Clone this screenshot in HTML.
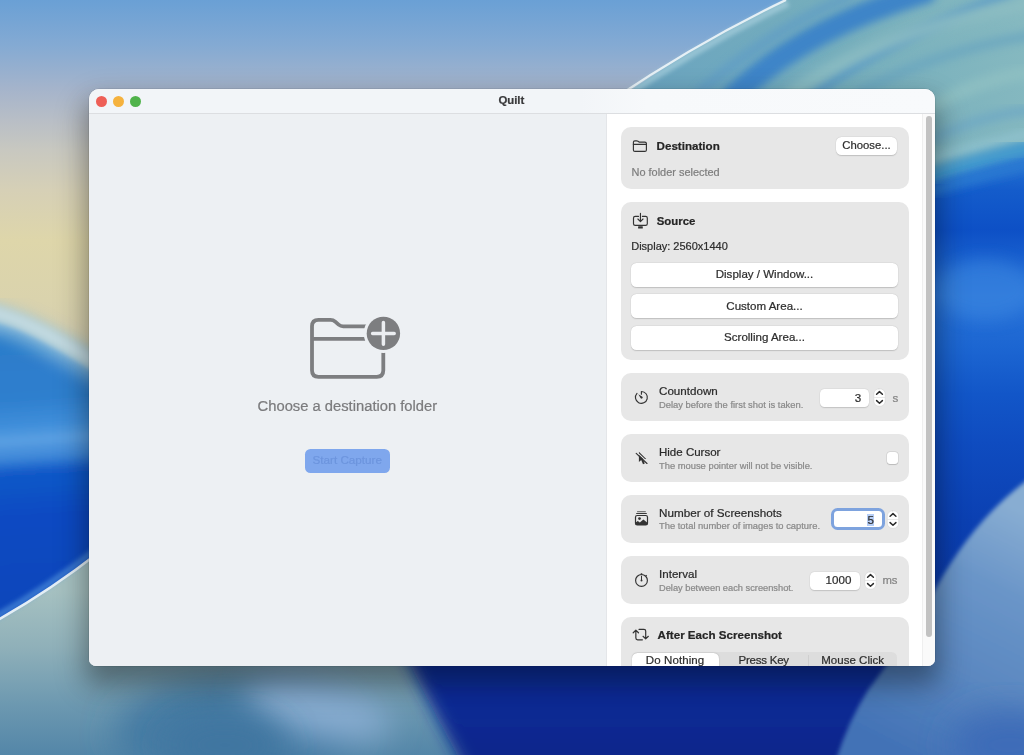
<!DOCTYPE html>
<html lang="en">
<head>
<meta charset="utf-8">
<title>Quilt</title>
<style>
*{box-sizing:border-box;margin:0;padding:0}
html,body{width:1024px;height:755px;overflow:hidden;background:#2a60b8}
body{position:relative;font-family:"Liberation Sans",sans-serif;color:#2b2b2b}
#wall{position:absolute;left:0;top:0;width:1024px;height:755px;display:block}
#shadow{position:absolute;left:89px;top:89px;width:846px;height:577px;border-radius:10px 10px 7px 7px;box-shadow:0 0 0 0.5px rgba(0,0,0,.13),0 14px 24px 1px rgba(0,0,0,.27),0 16px 30px 9px rgba(0,0,0,.15)}
#win{position:absolute;left:89px;top:89px;width:846px;height:577px;border-radius:10px 10px 7px 7px;overflow:hidden;background:#edf0f3}
#c{position:absolute;left:-89px;top:-89px;width:1024px;height:755px;will-change:transform}
.a{position:absolute;white-space:nowrap;-webkit-text-stroke:0.22px currentColor}
.btn{background:#fff;border-radius:5.5px;box-shadow:0 0.5px 1.2px rgba(0,0,0,.16),0 0 0 0.5px rgba(0,0,0,.03)}
svg.i{position:absolute;overflow:visible}
</style>
</head>
<body>
<svg id="wall" viewBox="0 0 1024 755">
<defs>
<filter id="b2" x="-20%" y="-20%" width="140%" height="140%"><feGaussianBlur stdDeviation="2"/></filter>
<filter id="b4" x="-20%" y="-20%" width="140%" height="140%"><feGaussianBlur stdDeviation="4"/></filter>
<filter id="b8" x="-30%" y="-30%" width="160%" height="160%"><feGaussianBlur stdDeviation="8"/></filter>
<filter id="b16" x="-40%" y="-40%" width="180%" height="180%"><feGaussianBlur stdDeviation="16"/></filter>
<linearGradient id="sky" x1="0" y1="0" x2="0" y2="755" gradientUnits="userSpaceOnUse">
<stop offset="0" stop-color="#6aa0d5"/>
<stop offset="0.06" stop-color="#84aad3"/>
<stop offset="0.118" stop-color="#a5b4cb"/>
<stop offset="0.159" stop-color="#b8bec6"/>
<stop offset="0.199" stop-color="#c8c8c0"/>
<stop offset="0.252" stop-color="#d6d0b6"/>
<stop offset="0.318" stop-color="#ded6aa"/>
<stop offset="0.397" stop-color="#dad3ad"/>
<stop offset="0.5" stop-color="#d2ccb0"/>
</linearGradient>
<linearGradient id="lblue" x1="0" y1="312" x2="20" y2="620" gradientUnits="userSpaceOnUse">
<stop offset="0" stop-color="#4c98d4"/>
<stop offset="0.075" stop-color="#2c7cca"/>
<stop offset="0.285" stop-color="#2e7fce"/>
<stop offset="0.37" stop-color="#3f8eda"/>
<stop offset="0.42" stop-color="#5a9fe2"/>
<stop offset="0.475" stop-color="#3f88d8"/>
<stop offset="0.525" stop-color="#1259c8"/>
<stop offset="0.675" stop-color="#0a49c2"/>
<stop offset="1" stop-color="#0b46ba"/>
</linearGradient>
<linearGradient id="lteal" x1="0" y1="590" x2="0" y2="755" gradientUnits="userSpaceOnUse">
<stop offset="0" stop-color="#a6c1c1"/>
<stop offset="0.35" stop-color="#8fb0b9"/>
<stop offset="0.7" stop-color="#6c98b0"/>
<stop offset="1" stop-color="#5386a8"/>
</linearGradient>
<linearGradient id="rblue" x1="0" y1="150" x2="0" y2="620" gradientUnits="userSpaceOnUse">
<stop offset="0" stop-color="#2f7ad4"/>
<stop offset="0.085" stop-color="#145ccb"/>
<stop offset="0.17" stop-color="#0d50c6"/>
<stop offset="0.23" stop-color="#185fce"/>
<stop offset="0.31" stop-color="#2872d8"/>
<stop offset="0.42" stop-color="#1c66d2"/>
<stop offset="0.52" stop-color="#1256c8"/>
<stop offset="0.62" stop-color="#0f4cc0"/>
<stop offset="0.79" stop-color="#0b40b2"/>
<stop offset="1" stop-color="#0a38a8"/>
</linearGradient>
<linearGradient id="blob" x1="1000" y1="500" x2="880" y2="740" gradientUnits="userSpaceOnUse">
<stop offset="0" stop-color="#88add2"/>
<stop offset="0.3" stop-color="#6a95c8"/>
<stop offset="0.65" stop-color="#5a87c0"/>
<stop offset="1" stop-color="#4272b6"/>
</linearGradient>
<linearGradient id="tealg" x1="640" y1="90" x2="1024" y2="0" gradientUnits="userSpaceOnUse">
<stop offset="0" stop-color="#6aa4c0"/>
<stop offset="0.5" stop-color="#76aebc"/>
<stop offset="1" stop-color="#86b9c0"/>
</linearGradient>
<linearGradient id="navy" x1="0" y1="660" x2="0" y2="760" gradientUnits="userSpaceOnUse">
<stop offset="0" stop-color="#0c2f9e"/>
<stop offset="0.5" stop-color="#0a2a94"/>
<stop offset="1" stop-color="#08258a"/>
</linearGradient>
</defs>
<!-- base sky / sand -->
<rect width="1024" height="755" fill="url(#sky)"/>
<!-- left blue waves -->
<path d="M-20,318 C20,324 50,344 100,374 L300,430 L300,640 L-20,640 Z" fill="url(#lblue)" filter="url(#b2)"/>
<path d="M-20,316 C20,322 50,342 110,376" fill="none" stroke="#8fc0dc" stroke-width="26" filter="url(#b8)" opacity=".8"/>
<path d="M-20,310 C20,316 50,336 110,370" fill="none" stroke="#c4dbe2" stroke-width="12" filter="url(#b4)"/>
<!-- lower-left teal under white curve -->
<path d="M-20,629 Q47.5,594 100,552 Q160,500 260,450 L620,450 L620,780 L-20,780 Z" fill="url(#lteal)"/>
<!-- bottom-left darker steel -->
<ellipse cx="235" cy="735" rx="120" ry="55" fill="#447aa3" filter="url(#b16)"/>
<ellipse cx="318" cy="708" rx="75" ry="30" fill="#86abcf" filter="url(#b16)" transform="rotate(14 318 708)"/>
<ellipse cx="225" cy="745" rx="60" ry="30" fill="#3f76a0" filter="url(#b16)"/>
<!-- navy bottom -->
<path d="M360,560 L960,560 L960,800 L482,800 Q425,700 360,560 Z" fill="url(#navy)" filter="url(#b8)"/>
<!-- right side blue -->
<rect x="880" y="140" width="200" height="520" fill="url(#rblue)"/>
<ellipse cx="985" cy="290" rx="50" ry="30" fill="#3a86e0" opacity=".6" filter="url(#b8)"/>
<!-- teal arc top-right -->
<path d="M596,115 Q700,39 792,-3 L792,-6 L1040,-6 L1040,148 Q985,158 930,176 L596,176 Z" fill="url(#tealg)"/>
<g fill="none" stroke-linecap="round">
<path d="M733,97 Q800,30 925,-8" stroke="#3c84c8" stroke-width="23" filter="url(#b4)"/>
<path d="M812,95 Q890,38 1010,-6" stroke="#4f92c8" stroke-width="9" filter="url(#b4)" opacity=".75"/>
<path d="M700,92 Q770,30 850,-4" stroke="#5f9cc6" stroke-width="10" filter="url(#b4)" opacity=".8"/>
<path d="M790,95 Q880,30 1030,4" stroke="#8dbdc2" stroke-width="14" filter="url(#b4)" opacity=".8"/>
<path d="M860,92 Q940,50 1030,36" stroke="#6aa6c0" stroke-width="10" filter="url(#b4)" opacity=".8"/>
<path d="M925,112 Q970,82 1030,72" stroke="#8fc0c2" stroke-width="14" filter="url(#b4)" opacity=".8"/>
<path d="M930,140 Q980,116 1030,110" stroke="#6ea8c4" stroke-width="10" filter="url(#b4)" opacity=".8"/>
<path d="M925,160 Q980,146 1030,134" stroke="#93c4d0" stroke-width="9" filter="url(#b4)" opacity=".8"/>
<path d="M925,178 Q980,160 1030,148" stroke="#459acd" stroke-width="17" filter="url(#b4)"/>
<path d="M925,192 Q980,176 1030,164" stroke="#2a7ad2" stroke-width="12" filter="url(#b4)" opacity=".9"/>
</g>
<!-- light blob bottom-right -->
<path d="M1030,478 Q975,518 937,586 Q899,650 868,690 Q848,722 836,760 L1030,760 Z" fill="url(#blob)" filter="url(#b2)"/>
<ellipse cx="1010" cy="745" rx="60" ry="35" fill="#3d6cb8" filter="url(#b16)"/>
<!-- white curves -->
<path d="M600,106 Q700,36 792,-5" fill="none" stroke="#eef4f8" stroke-width="2.2" filter="url(#b2)" opacity=".0"/>
<path d="M614,103 Q702,44 788,3" fill="none" stroke="#a9d0de" stroke-width="7" opacity=".7" filter="url(#b2)"/>
<path d="M612,100 Q700,41 786,0" fill="none" stroke="#eaf2f7" stroke-width="2.4" opacity=".95"/>
<path d="M-6,618 Q47.5,588 100,547" fill="none" stroke="#5a9be0" stroke-width="7" opacity=".55" filter="url(#b2)"/>
<path d="M-6,622 Q47.5,592.5 100,551.5" fill="none" stroke="#e4eef5" stroke-width="2.6"/>
</svg>

<div id="shadow"></div>
<div id="win"><div id="c">
<div style="position:absolute;left:89px;top:89px;width:846px;height:24px;background:linear-gradient(90deg,#f2f5f8 0,#f2f5f8 58%,#f7f9fb 66%,#f8fafc 100%);"></div>
<div style="position:absolute;left:89px;top:113px;width:846px;height:1px;background:#dcdee1;"></div>
<div style="position:absolute;left:95.5px;top:95.5px;width:11.0px;height:11.0px;border-radius:50%;background:#ee5f57;"></div>
<div style="position:absolute;left:112.8px;top:95.5px;width:11.0px;height:11.0px;border-radius:50%;background:#f5b23e;"></div>
<div style="position:absolute;left:130.1px;top:95.5px;width:11.0px;height:11.0px;border-radius:50%;background:#50b34b;"></div>
<div class="a" style="left:498.4px;top:93.00px;font-size:11.4px;line-height:14px;color:#3a3a3c;font-weight:bold;">Quilt</div>
<div style="position:absolute;left:89px;top:114px;width:518px;height:552px;background:#edf0f3;"></div>
<div style="position:absolute;left:607px;top:114px;width:328px;height:552px;background:#ffffff;"></div>
<div style="position:absolute;left:606px;top:114px;width:1px;height:552px;background:#e4e6e9;"></div>
<div class="a" style="left:257.6px;top:397.00px;font-size:14.75px;line-height:18px;color:#7b7b7d;">Choose a destination folder</div>
<div style="position:absolute;left:305px;top:449px;width:85px;height:24px;border-radius:5.5px;background:#7fa7ed;"></div>
<div class="a" style="left:312.5px;top:452.00px;font-size:11.7px;line-height:15px;color:#6d95de;">Start Capture</div>
<div style="position:absolute;left:922px;top:114px;width:13px;height:552px;background:#fafafa;border-left:1px solid #efefef;"></div>
<div style="position:absolute;left:926px;top:116px;width:6px;height:520.5px;background:#c2c2c2;border-radius:3px;"></div>
<div style="position:absolute;left:621px;top:127px;width:288px;height:62px;background:#e7e7e7;border-radius:10px;"></div>
<div style="position:absolute;left:621px;top:202px;width:288px;height:158px;background:#e7e7e7;border-radius:10px;"></div>
<div style="position:absolute;left:621px;top:373px;width:288px;height:48px;background:#e7e7e7;border-radius:10px;"></div>
<div style="position:absolute;left:621px;top:434px;width:288px;height:48px;background:#e7e7e7;border-radius:10px;"></div>
<div style="position:absolute;left:621px;top:495px;width:288px;height:48px;background:#e7e7e7;border-radius:10px;"></div>
<div style="position:absolute;left:621px;top:556px;width:288px;height:48px;background:#e7e7e7;border-radius:10px;"></div>
<div style="position:absolute;left:621px;top:617px;width:288px;height:103px;background:#e7e7e7;border-radius:10px;"></div>
<div class="a" style="left:656.6px;top:139.00px;font-size:11.6px;line-height:14px;color:#262626;font-weight:bold;">Destination</div>
<div class="a" style="left:631.5px;top:165.00px;font-size:10.95px;line-height:14px;color:#7e7e7e;">No folder selected</div>
<div class="btn" style="position:absolute;left:836px;top:137px;width:61px;height:18px;"></div>
<div class="a" style="left:836.0px;top:138.00px;font-size:11.3px;line-height:14px;color:#2e2e2e;width:61px;text-align:center;">Choose...</div>
<div class="a" style="left:656.7px;top:214.00px;font-size:11.4px;line-height:14px;color:#262626;font-weight:bold;">Source</div>
<div class="a" style="left:631.2px;top:239.00px;font-size:11.0px;line-height:14px;color:#2e2e2e;">Display: 2560x1440</div>
<div class="btn" style="position:absolute;left:631px;top:263.0px;width:267px;height:24.0px;"></div>
<div class="a" style="left:631.0px;top:267.00px;font-size:11.55px;line-height:14px;color:#2e2e2e;width:267px;text-align:center;">Display / Window...</div>
<div class="btn" style="position:absolute;left:631px;top:294.0px;width:267px;height:24.0px;"></div>
<div class="a" style="left:631.0px;top:299.00px;font-size:11.55px;line-height:14px;color:#2e2e2e;width:267px;text-align:center;">Custom Area...</div>
<div class="btn" style="position:absolute;left:631px;top:325.5px;width:267px;height:24.0px;"></div>
<div class="a" style="left:631.0px;top:330.00px;font-size:11.55px;line-height:14px;color:#2e2e2e;width:267px;text-align:center;">Scrolling Area...</div>
<div class="a" style="left:659.0px;top:383.00px;font-size:11.62px;line-height:15px;color:#2b2b2b;">Countdown</div>
<div class="a" style="left:659.0px;top:399.00px;font-size:9.39px;line-height:12px;color:#8a8a8a;">Delay before the first shot is taken.</div>
<div class="a" style="left:659.0px;top:445.00px;font-size:11.53px;line-height:14px;color:#2b2b2b;">Hide Cursor</div>
<div class="a" style="left:659.0px;top:460.00px;font-size:9.37px;line-height:12px;color:#8a8a8a;">The mouse pointer will not be visible.</div>
<div class="a" style="left:659.0px;top:505.00px;font-size:11.7px;line-height:15px;color:#2b2b2b;">Number of Screenshots</div>
<div class="a" style="left:659.0px;top:520.00px;font-size:9.4px;line-height:12px;color:#8a8a8a;">The total number of images to capture.</div>
<div class="a" style="left:659.0px;top:567.00px;font-size:11.6px;line-height:14px;color:#2b2b2b;">Interval</div>
<div class="a" style="left:659.0px;top:582.00px;font-size:9.27px;line-height:12px;color:#8a8a8a;">Delay between each screenshot.</div>
<div style="position:absolute;left:820px;top:389px;width:49px;height:17.5px;background:#fff;border-radius:4.5px;box-shadow:0 0.5px 1.2px rgba(0,0,0,.15),0 0 0 0.5px rgba(0,0,0,.03);"></div>
<div class="a" style="left:820.0px;top:391.00px;font-size:11.6px;line-height:14px;color:#2e2e2e;width:41.2px;text-align:right;">3</div>
<div class="a" style="left:892.4px;top:391.00px;font-size:11.6px;line-height:14px;color:#858585;">s</div>
<div style="position:absolute;left:886.5px;top:452px;width:11.5px;height:11.5px;background:#fff;border-radius:3px;box-shadow:0 0 0 0.5px rgba(0,0,0,.12),0 0.5px 1px rgba(0,0,0,.14);"></div>
<div style="position:absolute;left:830.5px;top:508.3px;width:54.0px;height:21.69999999999999px;background:#fff;border-radius:6.5px;border:3px solid #7ea3de;"></div>
<div style="position:absolute;left:867px;top:513.5px;width:7.2999999999999545px;height:12.100000000000023px;background:#b5cdf6;"></div>
<div class="a" style="left:830.0px;top:513.00px;font-size:11.6px;line-height:14px;color:#2e2e2e;width:43.9px;text-align:right;">5</div>
<div style="position:absolute;left:810px;top:572px;width:49.5px;height:17.5px;background:#fff;border-radius:4.5px;box-shadow:0 0.5px 1.2px rgba(0,0,0,.15),0 0 0 0.5px rgba(0,0,0,.03);"></div>
<div class="a" style="left:810.0px;top:573.00px;font-size:11.6px;line-height:14px;color:#2e2e2e;width:41.4px;text-align:right;">1000</div>
<div class="a" style="left:882.4px;top:573.00px;font-size:11.3px;line-height:14px;color:#858585;">ms</div>
<div class="a" style="left:657.6px;top:628.00px;font-size:11.6px;line-height:14px;color:#262626;font-weight:bold;">After Each Screenshot</div>
<div style="position:absolute;left:632px;top:652px;width:265px;height:24px;background:#dddddd;border-radius:5.5px;"></div>
<div style="position:absolute;left:632px;top:652.5px;width:87px;height:23.5px;background:#fff;border-radius:5.5px;box-shadow:0 0.5px 1.5px rgba(0,0,0,.25);"></div>
<div style="position:absolute;left:808px;top:655px;width:1px;height:21px;background:#cfcfcf;"></div>
<div class="a" style="left:645.8px;top:653.00px;font-size:11.5px;line-height:14px;color:#2e2e2e;letter-spacing:0.1px;">Do Nothing</div>
<div class="a" style="left:738.5px;top:653.00px;font-size:11.5px;line-height:14px;color:#2e2e2e;letter-spacing:-0.23px;">Press Key</div>
<div class="a" style="left:821.2px;top:653.00px;font-size:11.5px;line-height:14px;color:#2e2e2e;letter-spacing:0.03px;">Mouse Click</div>
<svg class="i" style="left:0;top:0" width="1024" height="755" viewBox="0 0 1024 755" fill="none" stroke-linecap="round" stroke-linejoin="round">
<!-- big folder -->
<g stroke="#7d7e80" stroke-width="3.8" stroke-linecap="butt">
<path d="M383.3,360 L383.3,331.3 Q383.3,326.3 378.3,326.3 L343.2,326.3 Q340.6,326.3 338.6,324.6 L335.2,321.6 Q333.2,319.8 330.4,319.8 L318.5,319.8 Q312,319.8 312,326.3 L312,370.3 Q312,376.8 318.5,376.8 L376.8,376.8 Q383.3,376.8 383.3,370.3 L383.3,352"/>
<path d="M312,338.8 H383"/>
</g>
<circle cx="383.4" cy="333.4" r="19.7" fill="#edf0f3"/>
<circle cx="383.4" cy="333.4" r="16.7" fill="#7d7e80"/>
<path d="M372.6,333.4 H394.2 M383.4,322.6 V344.2" stroke="#eceef1" stroke-width="3.5"/>
<!-- small folder -->
<g stroke="#333" stroke-width="1.15">
<path d="M633.4,142.3 Q633.4,140.8 634.9,140.8 L636.7,140.8 Q637.4,140.8 638,141.2 L638.7,141.7 Q639.2,142.1 640,142.1 L644.9,142.1 Q646.4,142.1 646.4,143.6 L646.4,149.9 Q646.4,151.4 644.9,151.4 L634.9,151.4 Q633.4,151.4 633.4,149.9 Z"/>
<path d="M633.4,144.4 H646.4"/>
</g>
<!-- source: monitor with arrow -->
<g stroke="#333" stroke-width="1.15">
<path d="M638.5,216.4 H635.2 Q633.5,216.4 633.5,218.1 V223.7 Q633.5,225.4 635.2,225.4 H645.6 Q647.3,225.4 647.3,223.7 V218.1 Q647.3,216.4 645.6,216.4 H642.4"/>
<path d="M640.45,213.4 V221.3 M637.9,219 L640.45,221.6 L643,219"/>
</g>
<rect x="638.1" y="226.3" width="4.7" height="2.3" rx="0.4" fill="#333"/>
<!-- countdown -->
<g stroke="#333" stroke-width="1.15">
<path d="M641.4,394.2 V391.45 A5.95,5.95 0 1 1 637.0,393.4"/>
</g>
<path d="M638.3,394.3 L642.4,396.7 A1.15,1.15 0 0 1 640.7,398.3 Z" fill="#333"/>
<!-- cursor slash -->
<path d="M638.9,451.7 L638.9,461.9 L641.2,459.9 L643.0,464.2 L644.8,463.4 L643.0,459.3 L646.2,459.1 Z" fill="#333"/>
<path d="M637.1,452.4 L647.9,462.6" stroke="#e7e7e7" stroke-width="1.3"/>
<path d="M636.2,453.3 L647.0,463.5" stroke="#333" stroke-width="1.15"/>
<!-- photos stack -->
<rect x="635.5" y="515.5" width="12" height="9.4" rx="1.7" stroke="#333" stroke-width="1.2"/>
<path d="M636.6,513.5 H646.4" stroke="#3a3a3a" stroke-width="1"/>
<path d="M637.5,511.7 H645.4" stroke="#555" stroke-width="0.9"/>
<circle cx="639.5" cy="518.6" r="1.35" fill="#333"/>
<path d="M635.6,522.6 L637.8,521.0 L639.8,522.5 L643.4,519.6 L647.4,522.7 L647.4,524.0 Q647.4,524.9 646.4,524.9 L636.6,524.9 Q635.6,524.9 635.6,524.0 Z" fill="#333"/>
<!-- timer -->
<circle cx="641.5" cy="580.4" r="5.9" stroke="#333" stroke-width="1.15"/>
<path d="M641.5,573.3 V574.4 M645.9,575.9 L646.6,575.2" stroke="#333" stroke-width="1.5" stroke-linecap="butt"/>
<path d="M641.5,576.1 V580.4" stroke="#333" stroke-width="1"/>
<circle cx="641.5" cy="580.5" r="1" fill="#333"/>
<!-- repeat -->
<g stroke="#333" stroke-width="1.2">
<path d="M642.4,639.85 H637.6 Q635.85,639.85 635.85,638.1 V630.6 M633.2,632.8 L635.85,630.2 L638.5,632.8"/>
<path d="M639.0,629.35 H643.95 Q645.7,629.35 645.7,631.1 V638.5 M643.05,636.3 L645.7,638.9 L648.35,636.3"/>
</g>
<!-- steppers -->
<g>
<rect x="873.8" y="388.8" width="11.4" height="17.5" rx="5.2" fill="#fff" stroke="#cfcfcf" stroke-width="0.5"/>
<path d="M874.2,397.5 H884.8" stroke="#dcdcdc" stroke-width="0.6"/>
<path d="M876.6,394.2 L879.5,391.6 L882.4,394.2 M876.6,400.6 L879.5,403.2 L882.4,400.6" stroke="#2a2a2a" stroke-width="1.5"/>
</g>
<g transform="translate(13.5 122)">
<rect x="873.8" y="388.8" width="11.4" height="17.5" rx="5.2" fill="#fff" stroke="#cfcfcf" stroke-width="0.5"/>
<path d="M874.2,397.5 H884.8" stroke="#dcdcdc" stroke-width="0.6"/>
<path d="M876.6,394.2 L879.5,391.6 L882.4,394.2 M876.6,400.6 L879.5,403.2 L882.4,400.6" stroke="#2a2a2a" stroke-width="1.5"/>
</g>
<g transform="translate(-9 183)">
<rect x="873.8" y="388.8" width="11.4" height="17.5" rx="5.2" fill="#fff" stroke="#cfcfcf" stroke-width="0.5"/>
<path d="M874.2,397.5 H884.8" stroke="#dcdcdc" stroke-width="0.6"/>
<path d="M876.6,394.2 L879.5,391.6 L882.4,394.2 M876.6,400.6 L879.5,403.2 L882.4,400.6" stroke="#2a2a2a" stroke-width="1.5"/>
</g>
</svg></div></div>
</body>
</html>
